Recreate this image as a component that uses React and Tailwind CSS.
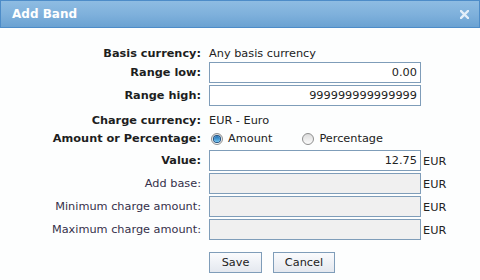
import React from "react";

const font = { fontFamily: '"DejaVu Sans", Verdana, sans-serif' };

function Label({ children, bold }) {
  return (
    <div className={`w-[201px] shrink-0 text-right whitespace-nowrap ${bold ? "font-bold text-[#1e1e1e]" : "text-[#35304a]"}`}>
      {children}
    </div>
  );
}

function Input({ value, disabled }) {
  return (
    <div
      className={`w-[212px] h-[21px] border border-[#7f9db9] flex items-center justify-end pr-[3px] text-[#222] ${disabled ? "bg-[#f0f0f0]" : "bg-white"}`}
    >
      {value}
    </div>
  );
}

function Radio({ checked }) {
  return (
    <div className="w-[12px] h-[12px] rounded-full border border-[#8e8f8f] bg-gradient-to-b from-[#dcdcdc] to-[#fbfbfb] flex items-center justify-center">
      {checked && (
        <div className="w-[6px] h-[6px] rounded-full bg-gradient-to-b from-[#1f6fb3] to-[#6ac2f0] shadow-[0_0_0_1px_#1c4f80]" />
      )}
    </div>
  );
}

export default function App() {
  return (
    <div className="w-[480px] h-[280px] bg-[#fdfefe] text-[11.3px] leading-none overflow-hidden" style={font}>
      <div className="h-[28px] border border-[#4d8cc8] bg-gradient-to-b from-[#8ebce2] via-[#7fb1dc] to-[#6ba2d2] flex items-center justify-between pl-[11px] pr-[10px]">
        <span className="text-white font-bold text-[12px]">Add Band</span>
        <svg width="9" height="9" viewBox="0 0 9 9" className="mt-[1px]">
          <path d="M1 1 L8 8 M8 1 L1 8" stroke="#e3eef9" strokeWidth="2.4" strokeLinecap="square" />
        </svg>
      </div>

      <div className="flex flex-col">
        <div className="flex items-center gap-2 h-[16px] mt-[18px]">
          <Label bold>Basis currency:</Label>
          <span className="text-[#222]">Any basis currency</span>
        </div>
        <div className="flex items-center gap-2 h-[21px]">
          <Label bold>Range low:</Label>
          <Input value="0.00" />
        </div>
        <div className="flex items-center gap-2 h-[21px] mt-[2px]">
          <Label bold>Range high:</Label>
          <Input value="999999999999999" />
        </div>
        <div className="flex items-center gap-2 h-[16px] mt-[7px]">
          <Label bold>Charge currency:</Label>
          <span className="text-[#222]">EUR - Euro</span>
        </div>
        <div className="flex items-center gap-2 h-[16px] mt-[2px]">
          <Label bold>Amount or Percentage:</Label>
          <div className="flex items-center ml-[2px]">
            <Radio checked />
            <span className="ml-[5px] text-[#222]">Amount</span>
            <div className="ml-[30px]"><Radio /></div>
            <span className="ml-[5px] text-[#222]">Percentage</span>
          </div>
        </div>
        <div className="flex items-center gap-2 h-[21px] mt-[3px]">
          <Label bold>Value:</Label>
          <div className="flex items-center gap-[2px]">
            <Input value="12.75" />
            <span className="text-[#222] mt-[2px]">EUR</span>
          </div>
        </div>
        <div className="flex items-center gap-2 h-[21px] mt-[2px]">
          <Label>Add base:</Label>
          <div className="flex items-center gap-[2px]">
            <Input disabled />
            <span className="text-[#222] mt-[2px]">EUR</span>
          </div>
        </div>
        <div className="flex items-center gap-2 h-[21px] mt-[2px]">
          <Label>Minimum charge amount:</Label>
          <div className="flex items-center gap-[2px]">
            <Input disabled />
            <span className="text-[#222] mt-[2px]">EUR</span>
          </div>
        </div>
        <div className="flex items-center gap-2 h-[21px] mt-[2px]">
          <Label>Maximum charge amount:</Label>
          <div className="flex items-center gap-[2px]">
            <Input disabled />
            <span className="text-[#222] mt-[2px]">EUR</span>
          </div>
        </div>
        <div className="flex items-center ml-[209px] mt-[12px] gap-[11px]">
          <button className="w-[53px] h-[21px] border border-[#7f9db9] bg-gradient-to-b from-[#fafbfd] to-[#e4e8ef] text-[#222] text-[11.3px]" style={font}>
            Save
          </button>
          <button className="w-[62px] h-[21px] border border-[#7f9db9] bg-gradient-to-b from-[#fafbfd] to-[#e4e8ef] text-[#222] text-[11.3px]" style={font}>
            Cancel
          </button>
        </div>
      </div>
    </div>
  );
}
